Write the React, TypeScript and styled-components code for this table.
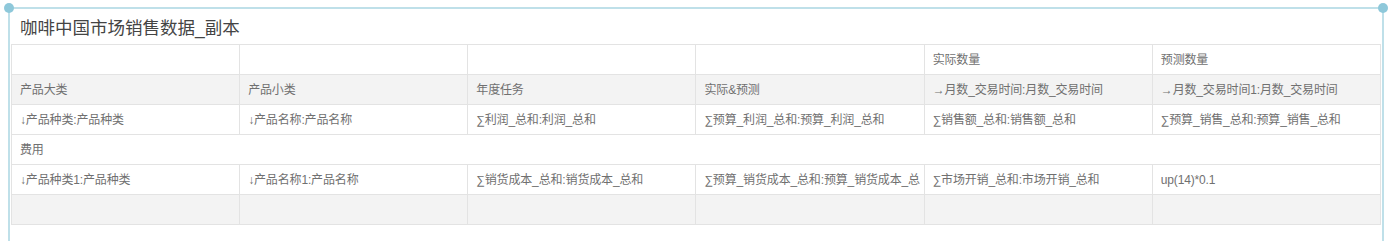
import React from 'react';
import styled, { createGlobalStyle } from 'styled-components';

const GlobalStyle = createGlobalStyle`
  html, body {
    margin: 0;
    padding: 0;
    background: #ffffff;
  }
  body {
    font-family: "Liberation Sans", "Noto Sans CJK SC", sans-serif;
  }
`;

const Page = styled.div`
  padding: 7px 0 0 8px;
  height: 241px;
  box-sizing: border-box;
  overflow: hidden;
`;

const Frame = styled.div`
  position: relative;
  width: 1376px;
  height: 240px;
  box-sizing: border-box;
  border-top: 2px solid #bfe0e9;
  border-left: 2px solid #bfe0e9;
  border-right: 2px solid #bfe0e9;
`;

const Handle = styled.span<{ side: 'left' | 'right' }>`
  position: absolute;
  top: -6px;
  ${(p) => (p.side === 'left' ? 'left: -6px;' : 'right: -6px;')}
  width: 10px;
  height: 10px;
  border-radius: 50%;
  background: #8ec8da;
`;

const Title = styled.div`
  height: 35px;
  padding-left: 10px;
  display: flex;
  align-items: center;
  font-size: 17.5px;
  color: #444444;
`;

const Grid = styled.table`
  margin-left: 1px;
  width: 1370px;
  border-collapse: collapse;
  table-layout: fixed;
`;

const Row = styled.tr<{ shaded?: boolean }>`
  background: ${(p) => (p.shaded ? '#f3f3f3' : '#ffffff')};
`;

const Cell = styled.td`
  border: 1px solid #e3e3e3;
  padding: 0;
  font-size: 12px;
  color: #707070;
`;

const CellText = styled.div`
  height: 29px;
  line-height: 30px;
  padding: 0 0 0 8px;
  letter-spacing: -0.15px;
  overflow: hidden;
  word-break: break-all;
`;

type RowData = { shaded?: boolean; cells: string[] };

const rows: RowData[] = [
  { cells: ['', '', '', '', '实际数量', '预测数量'] },
  {
    shaded: true,
    cells: ['产品大类', '产品小类', '年度任务', '实际&预测', '→月数_交易时间:月数_交易时间', '→月数_交易时间1:月数_交易时间'],
  },
  {
    cells: [
      '↓产品种类:产品种类',
      '↓产品名称:产品名称',
      '∑利润_总和:利润_总和',
      '∑预算_利润_总和:预算_利润_总和',
      '∑销售额_总和:销售额_总和',
      '∑预算_销售_总和:预算_销售_总和',
    ],
  },
];

const rowsAfter: RowData[] = [
  {
    cells: [
      '↓产品种类1:产品种类',
      '↓产品名称1:产品名称',
      '∑销货成本_总和:销货成本_总和',
      '∑预算_销货成本_总和:预算_销货成本_总和',
      '∑市场开销_总和:市场开销_总和',
      'up(14)*0.1',
    ],
  },
  { shaded: true, cells: ['', '', '', '', '', ''] },
];

const App: React.FC = () => {
  const renderRow = (r: RowData, i: number) => (
    <Row key={i} shaded={r.shaded}>
      {r.cells.map((c, j) => (
        <Cell key={j}>
          <CellText>{c}</CellText>
        </Cell>
      ))}
    </Row>
  );

  return (
    <Page>
      <GlobalStyle />
      <Frame>
        <Handle side="left" />
        <Handle side="right" />
        <Title>咖啡中国市场销售数据_副本</Title>
        <Grid>
          <tbody>
            {rows.map(renderRow)}
            <Row>
              <Cell colSpan={6}>
                <CellText>费用</CellText>
              </Cell>
            </Row>
            {rowsAfter.map(renderRow)}
          </tbody>
        </Grid>
      </Frame>
    </Page>
  );
};

export default App;
